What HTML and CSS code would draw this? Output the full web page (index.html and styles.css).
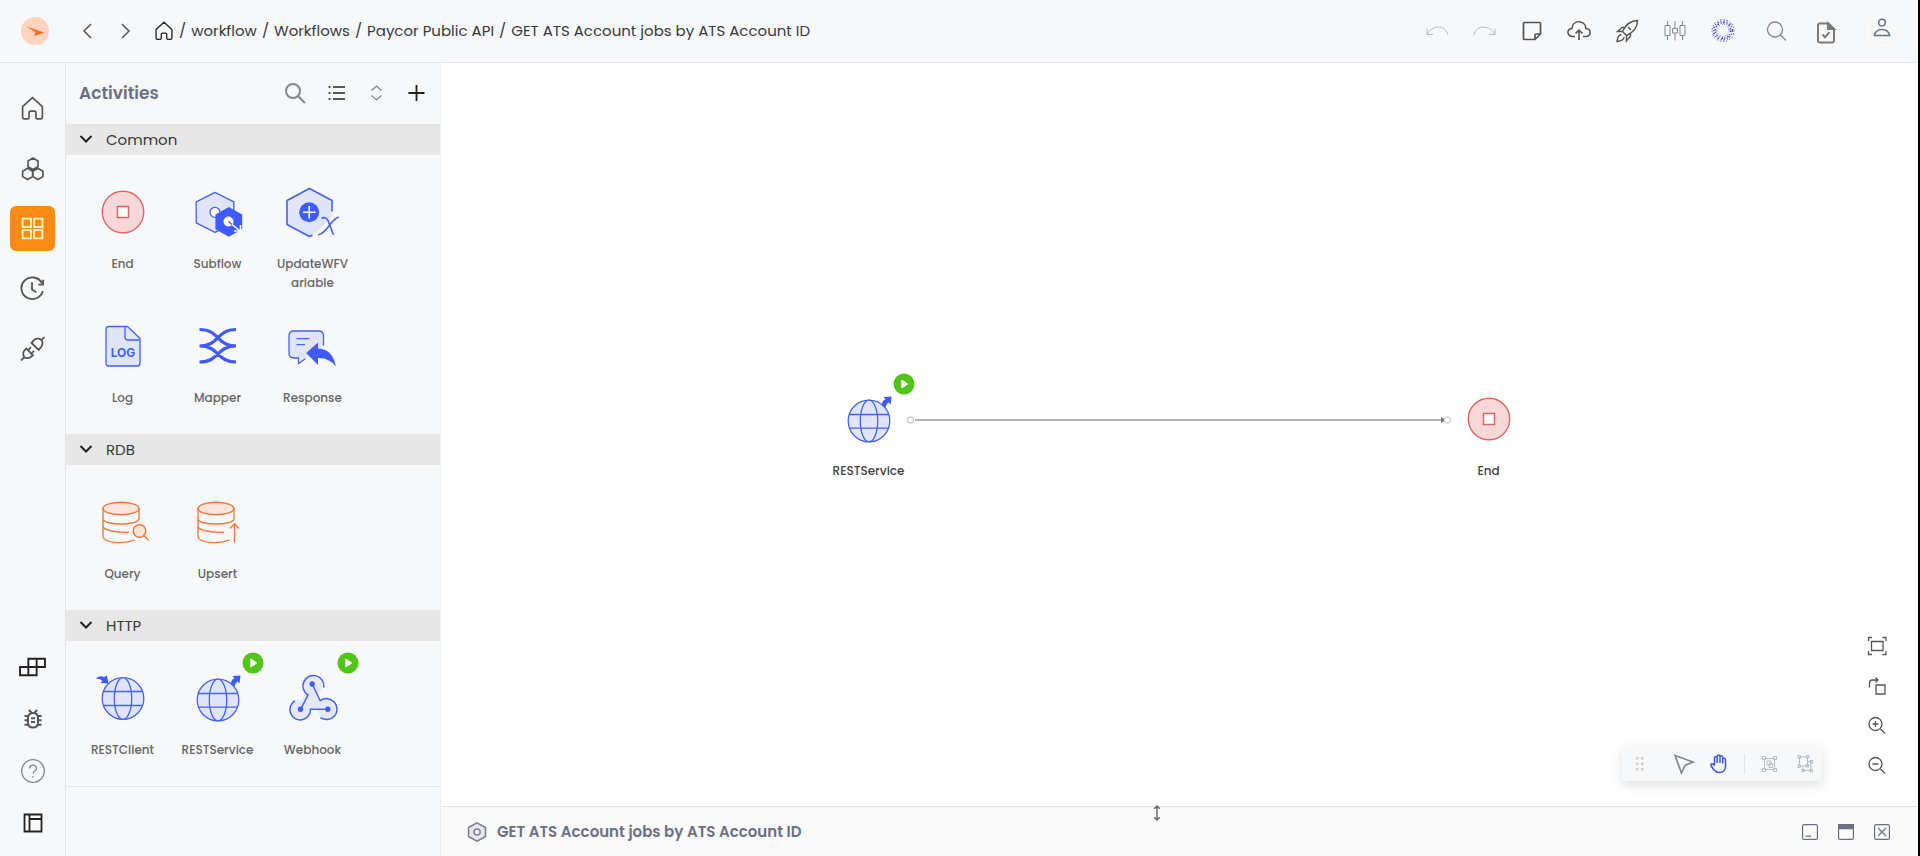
FILE: index.html
```html
<!DOCTYPE html>
<html lang="en">
<head>
<meta charset="utf-8">
<meta name="viewport" content="width=device-width, initial-scale=1">
<title>GET ATS Account jobs by ATS Account ID</title>
<link rel="stylesheet" href="styles.css">
</head>
<body>
<svg class="sprite" aria-hidden="true">
  <symbol id="i-house" viewBox="0 0 24 24"><path d="M2.5 10.2 12 1.5l9.500 8.700V20.500q0 1.500-1.500 1.500h-3.500q-1.200 0-1.200-1.200V16q0-1.500-1.500-1.500h-3.600q-1.500 0-1.500 1.500v4.800q0 1.200-1.200 1.200H4q-1.500 0-1.500-1.500z"/></symbol>
  <symbol id="i-chevron" viewBox="0 0 14 10"><path d="m1.500 1 5.500 5.500L12.500 1"/></symbol>
  <symbol id="a-end" viewBox="0 0 64 64"><circle cx="32" cy="32" r="20.700" fill="#f9d8d9" stroke="#df6466" stroke-width="1.400"/><path d="M26.500 26.500h11v11h-11z" fill="#fff" stroke="#df6466" stroke-width="1.500"/></symbol>
  <symbol id="a-globe" viewBox="0 0 64 64"><g fill="#e1e5fc" stroke="#4362ee" stroke-width="1.300"><circle cx="32" cy="34" r="20.800"/><ellipse cx="32" cy="34" rx="8.700" ry="20.800"/><path d="M12.500 27.500h39M12.500 41.200h39" fill="none"/></g><path d="M45 18q0-5 3.500-5.500L46.500 10l8-.500-1 8-2-2q-2 1-3 5z" fill="#3f5bff"/></symbol>
  <symbol id="a-play" viewBox="0 0 22 22"><circle cx="11" cy="11" r="10.500" fill="#52c41a"/><path d="M8.800 7v8l6-4z" fill="#fff" stroke="#fff" stroke-width="1" stroke-linejoin="round"/></symbol>
</svg>

<div class="app">
  <header class="topbar">
    <a class="logo" href="#" aria-label="Dashboard"><svg viewBox="0 0 28 28"><circle cx="14" cy="14" r="14" fill="#ffd3bd"/><path d="M5 9.500 23.500 15.500 13 19l1.500-4z" fill="#fa6a1a"/></svg></a>
    <nav class="history" aria-label="History">
      <button class="icon-btn" aria-label="Back"><svg viewBox="0 0 24 24"><path d="M16 5 9 12l7 7"/></svg></button>
      <button class="icon-btn" aria-label="Forward"><svg viewBox="0 0 24 24"><path d="m9 5 7 7-7 7"/></svg></button>
    </nav>
    <nav class="crumbs" aria-label="Breadcrumb">
      <a class="crumb-home" href="#" aria-label="Home"><svg viewBox="0 0 24 24"><use href="#i-house"/></svg></a>
      <span>/</span><a href="#">workflow</a>
      <span>/</span><a href="#">Workflows</a>
      <span>/</span><a href="#">Paycor Public API</a>
      <span>/</span><a href="#">GET ATS Account jobs by ATS Account ID</a>
    </nav>
    <div class="actions">
      <div class="tools">
        <button class="icon-btn pale" aria-label="Undo"><svg viewBox="0 0 24 24"><path d="M4 9.500v6h6M4 15.500C8.500 6.500 22 4.500 25 16"/></svg></button>
        <button class="icon-btn pale" aria-label="Redo"><svg viewBox="0 0 24 24"><path d="M24 9.500v6h-6M24 15.500C19.500 6.500 5.500 4.500 3 16"/></svg></button>
        <button class="icon-btn" aria-label="Note"><svg viewBox="0 0 24 24" stroke-width="1.700"><path d="M5.500 3.500h15q1 0 1 1V15L16 20.500H5.500q-1 0-1-1v-15q0-1 1-1zM21.500 15h-4q-1.500 0-1.500 1.500v4"/></svg></button>
        <button class="icon-btn" aria-label="Publish"><svg viewBox="0 0 24 24" stroke-width="1.600"><path d="M8 17.500H5.500C-.500 17-.500 9.500 5 9.500 5.500.5 18 .5 19 9.500c5.500 0 5.500 8-.500 8H16M12 21v-9.500M8.500 14.500 12 11.200l3.500 3.300"/></svg></button>
        <button class="icon-btn" aria-label="Deploy"><svg viewBox="0 0 24 24" stroke-width="1.400"><path d="M22.500 1.500C16 1.500 11 5 7.500 12.500l4 4C19 13 22.500 8 22.500 1.500zM10 8.500H7L2.500 12.500l5 0M15.500 14v3L11.500 22v-5.500M6.500 15.500c-3 0-4 2.500-4.500 7 4.500-.500 7-1.500 7-4.500M13 8l3 3"/></svg></button>
        <button class="icon-btn grey" aria-label="Settings"><svg viewBox="0 0 24 24"><path d="M4.500 2v4.500M4.500 16.500v4.500M2 6.500h5v10H2zM12 2v7.500M12 14v7.500M9.500 9.500h5V14h-5zM19.500 2v4.500M19.500 16.500v4.500M17 6.500h5v10h-5z"/></svg></button>
        <button class="icon-btn violet" aria-label="Assistant"><svg viewBox="0 0 24 24"><circle cx="12" cy="11.500" r="6" stroke-width="1" stroke-dasharray="1 2.400 .7 1.700"/><circle cx="12" cy="11.500" r="7.700" stroke-width="1.500" stroke-dasharray="1.700 1.900 1.200 1.200"/><circle cx="12" cy="11.500" r="9.300" stroke-width="1.500" stroke-dasharray="1.500 1.700 1 2.100"/><circle cx="12" cy="11.500" r="11" stroke-width="1" stroke-dasharray="1 1.800 1.500 2.200"/></svg></button>
      </div>
      <button class="icon-btn grey" aria-label="Search"><svg viewBox="0 0 24 24" stroke-width="1.300"><circle cx="12" cy="10.500" r="7.500"/><path d="m17.500 16 5.500 5.500"/></svg></button>
      <button class="icon-btn grey doc" aria-label="Tasks"><svg viewBox="0 0 24 24" stroke-width="2"><path d="M4.500 2.500h9l5.500 5.500v11.500q0 2-2 2h-12q-2 0-2-2v-15q0-2 1.500-2z"/><path d="M13 2.500v5.500h6z" fill="#7a7a7a"/><path d="m7.500 13.500 2.500 2.700 4.500-5"/></svg></button>
      <button class="avatar" aria-label="Account"><svg viewBox="0 0 24 24"><circle cx="12" cy="5.500" r="4"/><path d="M3 21c0-9.500 18-9.500 18 0z"/></svg></button>
    </div>
  </header>

  <div class="body">
    <nav class="rail" aria-label="Main">
      <div class="rail-top">
        <button class="rail-btn" aria-label="Home"><svg viewBox="0 0 24 24" stroke-width="1.600"><use href="#i-house"/></svg></button>
        <button class="rail-btn" aria-label="Models"><svg viewBox="0 0 24 24" stroke-width="1.600"><path d="m12.500 2 4.800 2.800v5.400l-4.800 2.800-4.800-2.800V4.800zM7.300 11.800l4.800 2.800v5.200l-4.800 2.800-4.800-2.800v-5.200zM17.200 11.800l4.800 2.800v5.200l-4.800 2.800-4.800-2.800v-5.200z"/></svg></button>
        <button class="rail-btn active" aria-label="Workflows"><svg viewBox="0 0 24 24" stroke-width="1.800"><path d="M2.500 2.500h8v8h-8zM13.500 2.500h8v8h-8zM2.500 13.500h8v8h-8zM13.500 13.500h8v8h-8z"/></svg></button>
        <button class="rail-btn" aria-label="History"><svg viewBox="0 0 26 26" stroke-width="1.900"><path d="M22.800 7.500A11.300 11.300 0 1 0 23.700 15.500M12.500 6.500v7.500l4.500 3"/><path d="M24 4v5h-5"/></svg></button>
        <button class="rail-btn" aria-label="Connections"><svg viewBox="0 0 24 24" stroke-width="1.700"><path d="m1 23.500 3.200-3.200M20.500 4 23.500 1M5.500 11.500l7.500 7.500M6 12.200c-4.500 3.300-3 8.600 0 9 3 .3 5-1.200 6.200-2.800M7.800 13.500l2.700-2.700M11 16.800l2.500-2.600M10.500 6l8 8M11.500 6.500C14 1.500 19 2 20.500 4c2 2 1.500 6-2.800 9.200"/></svg></button>
      </div>
      <div class="rail-bottom">
        <button class="rail-btn small dark" aria-label="Blocks"><svg class="wide" viewBox="0 0 26 20"><path d="M1 10h8v8H1zM9 10h8v8H9zM9 2h8v8H9zM17 2h8v8h-8z" stroke-width="1.800"/></svg></button>
        <button class="rail-btn small" aria-label="Debug"><svg viewBox="0 0 24 24" stroke-width="2"><path d="M12 6q5 0 5 5v4.500q0 5-5 5t-5-5V11q0-5 5-5zM8 3l2.500 2.700M16 3l-2.500 2.700M3.500 9H7M3.500 13.300H7M3.500 17.700H7M17 9h3.500M17 13.300h3.500M17 17.700h3.500M10 11.200h4M10 15h4"/></svg></button>
        <button class="rail-btn small grey" aria-label="Help"><svg viewBox="0 0 24 24" stroke-width="1.300"><circle cx="12" cy="12" r="11.300"/><path d="M8.500 9.500c0-4.500 7-4.500 7 0 0 2.500-3.500 2.500-3.500 5M12 17v1.500"/></svg></button>
        <button class="rail-btn small dark" aria-label="Layout"><svg viewBox="0 0 24 24" stroke-width="1.800"><path d="M3.500 3.500h17v17h-17zM8.500 3.500v17M8.500 8h12"/></svg></button>
      </div>
    </nav>

    <aside class="panel">
      <div class="panel-head">
        <h1>Activities</h1>
        <button class="icon-btn grey" aria-label="Search activities"><svg viewBox="0 0 24 24" stroke-width="2"><circle cx="9" cy="10" r="7"/><path d="m14 15 7 7"/></svg></button>
        <button class="icon-btn dark" aria-label="List view"><svg viewBox="0 0 24 24" stroke-width="1.600"><path d="M9 6h12M9 12h12M9 18h12M4.500 6h2M4.500 12h2M4.500 18h2"/></svg></button>
        <button class="icon-btn grey" aria-label="Expand all"><svg viewBox="0 0 24 24" stroke-width="1.300"><path d="m7.500 9.500 5-4.500 5 4.500M7.500 14.500l5 4.500 5-4.500"/></svg></button>
        <button class="icon-btn dark" aria-label="Add"><svg viewBox="0 0 24 24" stroke-width="1.800"><path d="M12.500 4v16M4.500 12h16"/></svg></button>
      </div>

      <section class="group">
        <h2><button class="group-head"><svg viewBox="0 0 14 10"><use href="#i-chevron"/></svg>Common</button></h2>
        <div class="tiles">
          <div class="tile"><div class="pic"><svg viewBox="0 0 64 64"><use href="#a-end"/></svg></div><span>End</span></div>
          <div class="tile"><div class="pic"><svg viewBox="0 0 64 64"><path d="M29 12.300 47.800 21.800v21L29 52.300 10.200 42.800v-21z" fill="#e1e5fc" stroke="#4362ee" stroke-width="1.300" stroke-linejoin="round"/><circle cx="29" cy="32.300" r="5" fill="#fff" stroke="#4362ee" stroke-width="1.300"/><path d="m42.800 27 13.400 7.500v14.700l-13.400 7.500-13.400-7.500V34.500z" fill="#3f5bff"/><circle cx="42.500" cy="41.500" r="5" fill="#fff"/><path d="m42.500 41.500 3.500 3" stroke="#3f5bff" stroke-width="1.300"/><path d="m46 44.500 7.500 6M54.500 45v6h-6.500" fill="none" stroke="#fff" stroke-width="1.600"/></svg></div><span>Subflow</span></div>
          <div class="tile"><div class="pic"><svg viewBox="0 0 64 64"><path d="M28.500 8.500 51 20.500V36L38 50l-9.500 6.500L6 44.300V20.500z" fill="#e1e5fc"/><g fill="none" stroke="#4362ee" stroke-width="1.600" stroke-linejoin="round"><path d="M51 31.500v-11l-22.500-12L6 20.500v24l22.500 12 3-1.500"/><path d="M40.500 38.500q4-2.500 6.500 2l5.500 14.200M57.800 37.300c-7 0-12 17-20.600 17.400"/></g><circle cx="28.200" cy="32.300" r="10" fill="#3f5bff"/><path d="M28.200 26v12.600M21.900 32.300h12.600" stroke="#fff" stroke-width="1.500"/></svg></div><span>UpdateWFV<wbr>ariable</span></div>
          <div class="tile"><div class="pic"><svg viewBox="0 0 64 64"><path d="M18 12.500h18.500l12.500 12v24.500q0 3-3 3H18q-3 0-3-3V15.500q0-3 3-3z" fill="#e1e5fc" stroke="#4362ee" stroke-width="1.300" stroke-linejoin="round"/><path d="M34 12.500v10.500q0 3 3 3h12" fill="none" stroke="#4362ee" stroke-width="1.300"/><text class="log-text" x="32" y="43" text-anchor="middle">LOG</text></svg></div><span>Log</span></div>
          <div class="tile"><div class="pic"><svg viewBox="0 0 64 64"><path d="M13.500 15.500C34 15.500 30 32 50 32M50 15.500C30 15.500 34 32 13.500 32M13.500 32C34 32 30 48 50 48M50 32C30 32 34 48 13.500 48" fill="none" stroke="#3f5bff" stroke-width="3.200"/></svg></div><span>Mapper</span></div>
          <div class="tile"><div class="pic"><svg viewBox="0 0 64 64"><path d="M42.500 31.500V22q0-5-5-5H13q-5 0-5 5v17q0 5 5 5h4.500v5.500l7-4.700" fill="#e1e5fc" stroke="#4362ee" stroke-width="1.300"/><path d="M15.500 24.700h13M15.500 30.700h8.500" stroke="#4362ee" stroke-width="1.300"/><path d="M25.200 39 37 28.500v6q14 0 18 18-7-9-18-8.500v7z" fill="#3f5bff"/></svg></div><span>Response</span></div>
        </div>
      </section>

      <section class="group">
        <h2><button class="group-head"><svg viewBox="0 0 14 10"><use href="#i-chevron"/></svg>RDB</button></h2>
        <div class="tiles">
          <div class="tile"><div class="pic"><svg viewBox="0 0 64 64" fill="none" stroke="#ee7a3c" stroke-width="1.400" stroke-linecap="round"><ellipse cx="30" cy="18.500" rx="18" ry="6.300" fill="#fbe4db"/><path d="M48 18.500v10.300c-1 7-35 7-36 0M12 18.500v28c1 7 22 7.500 31 3.700M12 36.500c1 4 14 6.200 25.500 5.800"/><circle cx="48.500" cy="41" r="6.300" fill="#fbe4db"/><path d="m53 45.500 4.200 4.200"/></svg></div><span>Query</span></div>
          <div class="tile"><div class="pic"><svg viewBox="0 0 64 64" fill="none" stroke="#ee7a3c" stroke-width="1.400" stroke-linecap="round"><ellipse cx="30" cy="18.500" rx="18" ry="6.300" fill="#fbe4db"/><path d="M48 18.500v10.300c-1 7-35 7-36 0M12 18.500v28c1 7 22 7.500 31 3.700M12 36.500c1 4 14 6.200 25.500 5.800M48.500 52V34M44.500 38l4-4.300 4 4.300"/></svg></div><span>Upsert</span></div>
        </div>
      </section>

      <section class="group">
        <h2><button class="group-head"><svg viewBox="0 0 14 10"><use href="#i-chevron"/></svg>HTTP</button></h2>
        <div class="tiles">
          <div class="tile"><div class="pic"><svg viewBox="0 0 64 64"><g fill="#e1e5fc" stroke="#4362ee" stroke-width="1.300"><circle cx="32" cy="32.500" r="20.800"/><ellipse cx="32" cy="32.500" rx="8.700" ry="20.800"/><path d="M12.500 25.500h39M12.500 39.500h39" fill="none"/></g><path d="M5 13q2-4 8-2l3-1.500 1.500 8-8-.500 2-2q-3-3-6.500-2z" fill="#3f5bff"/></svg></div><span>RESTClient</span></div>
          <div class="tile"><div class="pic"><svg viewBox="0 0 64 64"><use href="#a-globe"/></svg><svg class="badge" viewBox="0 0 22 22"><use href="#a-play"/></svg></div><span>RESTService</span></div>
          <div class="tile"><div class="pic"><svg viewBox="0 0 64 64"><path d="M32 10a10 10 0 0 1 5 18l2.500 6.500a10 10 0 1 1 0 17l-3-8h-7.500a10 10 0 1 1-9-10l7-5a10 10 0 0 1 5-18.500z" fill="#e6e9fd"/><g fill="none" stroke="#4362ee" stroke-width="1.500"><path d="M42.800 21.500A10.500 10.500 0 1 0 27 29L19.500 43.300M31.200 18l8 16.700A10.500 10.500 0 1 1 39.500 51.700M46.800 43.300H29.500A10.300 10.300 0 1 1 14 34.700"/></g><g fill="#3f5bff"><circle cx="31.200" cy="18" r="2.700"/><circle cx="19.500" cy="43.300" r="2.700"/><circle cx="46.800" cy="43.300" r="2.700"/></g></svg><svg class="badge" viewBox="0 0 22 22"><use href="#a-play"/></svg></div><span>Webhook</span></div>
        </div>
      </section>
    </aside>

    <main class="main">
      <div class="canvas">
        <svg class="edge" width="546" height="12" viewBox="0 0 546 12"><path d="M9 6h526" stroke="#b4b4b4" stroke-width="2"/><path d="m535 3 5 3-5 3z" fill="#777"/><circle cx="4.500" cy="6" r="3" fill="#fff" stroke="#cfcfcf" stroke-width="1.400"/><circle cx="541.500" cy="6" r="3" fill="#fff" stroke="#d8d8d8" stroke-width="1.400"/></svg>
        <div class="tile node node-start"><div class="pic"><svg viewBox="0 0 64 64"><use href="#a-globe"/></svg><svg class="badge" viewBox="0 0 22 22"><use href="#a-play"/></svg></div><span>RESTService</span></div>
        <div class="tile node node-end"><div class="pic"><svg viewBox="0 0 64 64"><use href="#a-end"/></svg></div><span>End</span></div>

        <div class="mode-bar">
          <svg class="grip" viewBox="0 0 8 14" fill="#cfcfcf"><path d="M0 0h2.500v2.500H0zM5 0h2.500v2.500H5zM0 5.500h2.500V8H0zM5 5.500h2.500V8H5zM0 11h2.500v2.500H0zM5 11h2.500v2.500H5z"/></svg>
          <button class="icon-btn grey" aria-label="Select"><svg viewBox="0 0 24 24" stroke-width="1.700"><path d="M3 3.500 21 10l-8 3.500L9.500 21z"/></svg></button>
          <button class="icon-btn blue" aria-label="Pan"><svg viewBox="0 0 24 24" stroke-width="1.500"><path d="M6.500 13V6q0-1.500 1.300-1.500T9.200 6v5M9.200 11V4.500q0-1.500 1.400-1.500T12 4.500V11M12 11V5q0-1.300 1.300-1.300T14.700 5v6.500M14.700 11V7.500q0-1.300 1.400-1.300t1.400 1.300V14q0 6.500-6 6.500-3.500 0-5.500-2.500L3 13.800q-.500-1.500.8-2 1-.300 2.700 2"/></svg></button>
          <span class="divider"></span>
          <button class="icon-btn pale" aria-label="Group"><svg viewBox="0 0 24 24"><path d="M7.500 6.500h10v11h-10zM5.500 4.500h3v3h-3zM16.500 4.500h3v3h-3zM5.500 16.500h3v3h-3zM16.500 16.500h3v3h-3zM10 9h4v4h-4zM12 11.500h3.500v4H12z"/></svg></button>
          <button class="icon-btn pale" aria-label="Ungroup"><svg viewBox="0 0 24 24"><path d="M6.500 5h8v9h-8zM5 3.500h2.500V6H5zM13.500 3.500H16V6h-2.500zM5 13h2.500v2.500H5zM14.500 9.500h3.500v9h-8v-4M17 8.500h2.500V11H17zM17 17.500h2.500V20H17zM9 17.500h2.500V20H9zM13 12.500h2.500V15H13z"/></svg></button>
        </div>
        <div class="zoom-bar">
          <button class="icon-btn" aria-label="Fit"><svg viewBox="0 0 24 24"><path d="M6.500 7.500h11.500v9H6.500zM3.500 7V3.500H7M17.500 3.500H21V7M3.500 17v3.500H7M17.500 20.500H21V17"/></svg></button>
          <button class="icon-btn" aria-label="Rotate"><svg viewBox="0 0 24 24"><path d="M11 11h9v9h-9zM4.500 13.500V9q0-3 3-3h5M10.500 3.500 13 6l-2.500 2.500"/></svg></button>
          <button class="icon-btn" aria-label="Zoom in"><svg viewBox="0 0 24 24"><circle cx="10.500" cy="10" r="6.500"/><path d="m15.500 15 4.500 4.500M10.500 7v6M7.500 10h6"/></svg></button>
          <button class="icon-btn" aria-label="Zoom out"><svg viewBox="0 0 24 24"><circle cx="10.500" cy="10" r="6.500"/><path d="m15.500 15 4.500 4.500M7.500 10h6"/></svg></button>
        </div>
      </div>

      <footer class="dock">
        <svg class="resize" viewBox="0 0 8 16"><path d="M4 1v14M1.200 3.800 4 1l2.800 2.800M1.200 12.200 4 15l2.800-2.800" fill="none" stroke="#6b6b6b" stroke-width="1.500"/></svg>
        <svg class="dock-icon" viewBox="0 0 20 20" stroke-width="1.500"><path d="m10 .8 8.500 4.700v9L10 19.200l-8.500-4.700v-9z" fill="#e3e4ee"/><circle cx="10" cy="10" r="3" fill="#fff"/></svg>
        <h2>GET ATS Account jobs by ATS Account ID</h2>
        <div class="dock-actions">
          <button aria-label="Minimize"><svg viewBox="0 0 16 16"><rect x=".6" y=".6" width="14.800" height="14.800" rx="1.500"/><path d="M3.500 12.200H9"/></svg></button>
          <button aria-label="Maximize"><svg viewBox="0 0 16 16"><rect x=".6" y=".6" width="14.800" height="14.800" rx="1.500"/><path d="M.6.6h14.800v4H.6z" fill="#6b7080"/></svg></button>
          <button aria-label="Close"><svg viewBox="0 0 16 16"><rect x=".6" y=".6" width="14.800" height="14.800" rx="1.500"/><path d="m4 4 8 8M12 4l-8 8"/></svg></button>
        </div>
      </footer>
    </main>
  </div>
</div>
</body>
</html>
```
FILE: styles.css
```css
* { box-sizing: border-box; }

body {
  margin: 0;
  font-family: Poppins, Inter, "Liberation Sans", sans-serif;
  color: #3a3a3a;
  background: #f7f8fa;
}

h1, h2 { margin: 0; }

button {
  padding: 0;
  border: 0;
  background: none;
  font: inherit;
  color: inherit;
  cursor: pointer;
}

a { color: inherit; text-decoration: none; }

.sprite { position: absolute; width: 0; height: 0; }

.app {
  display: flex;
  flex-direction: column;
  height: 100vh;
  min-height: 800px;
  border-right: 2px solid #000;
}

/* Top bar */
.topbar {
  display: flex;
  flex: none;
  align-items: center;
  height: 63px;
  padding: 0 21px;
  border-bottom: 1px solid #e3e5e9;
}

.logo, .logo svg { display: block; width: 28px; height: 28px; }

.history {
  display: flex;
  gap: 14px;
  margin: 0 17px 0 26px;
}

.icon-btn {
  flex: none;
  width: 24px;
  height: 24px;
  color: #555;
}

.icon-btn svg, .rail-btn svg, .avatar svg, .crumb-home svg, .group-head svg {
  display: block;
  fill: none;
  stroke: currentColor;
}

.icon-btn svg { width: 24px; height: 24px; overflow: visible; }
.icon-btn.pale { color: #b9bbc0; }
.icon-btn.grey { color: #85878c; }
.icon-btn.dark { color: #222; }
.icon-btn.blue { color: #3f5bd9; }
.icon-btn.violet { color: #5647c9; }
.icon-btn.doc { padding-top: 2px; color: #7a7a7a; }

.history svg { stroke-width: 1.5px; }

.crumbs {
  display: flex;
  align-items: center;
  gap: 5px;
  font-size: 15px;
  line-height: 24px;
  white-space: nowrap;
}

.crumb-home { color: #222; }
.crumb-home svg { width: 20px; height: 20px; stroke-width: 1.6px; }

.actions {
  display: flex;
  align-items: center;
  gap: 28px;
  margin-left: auto;
}

.tools { display: flex; gap: 24px; }

.avatar {
  width: 30px;
  height: 30px;
  padding: 1px 4px 7px;
  border: 1px solid #fff;
  border-radius: 50%;
  color: #6b7080;
}

.avatar svg { width: 20px; height: 20px; stroke-width: 1.8px; }

/* Side rail */
.body { display: flex; flex: 1; min-height: 0; }

.rail {
  display: flex;
  flex: none;
  flex-direction: column;
  justify-content: space-between;
  width: 66px;
  padding: 23px 10px 13px;
  border-right: 1px solid #e3e5e9;
}

.rail-top, .rail-bottom { display: flex; flex-direction: column; }
.rail-top { gap: 15px; }
.rail-bottom { gap: 12px; }

.rail-btn {
  display: flex;
  align-items: center;
  justify-content: center;
  width: 45px;
  height: 45px;
  border-radius: 6px;
  color: #555;
}

.rail-btn svg { width: 25px; height: 25px; }
.rail-btn.small { height: 40px; }
.rail-btn.small svg { width: 24px; height: 24px; }
.rail-btn.small .wide { width: 27px; }
.rail-btn.dark { color: #222; }
.rail-btn.grey { color: #85878c; }
.rail-btn.active { color: #fff3c4; background: #fa8c16; }

/* Activities panel */
.panel {
  flex: none;
  width: 375px;
  border-right: 1px solid #eceef1;
}

.panel-head {
  display: flex;
  align-items: center;
  gap: 16px;
  height: 61px;
  padding: 0 12px 2px 13px;
}

.panel-head h1 {
  margin-right: auto;
  font-size: 17px;
  font-weight: 600;
  line-height: 26px;
  color: #6b7080;
}

.group h2 { font-size: 15px; font-weight: 400; line-height: 31px; }

.group-head {
  display: flex;
  align-items: center;
  gap: 13px;
  width: 100%;
  height: 31px;
  padding: 0 13px;
  color: #3a3a3a;
  background: #e7e7e7;
}

.group-head svg { width: 14px; height: 10px; stroke: #222; stroke-width: 2px; }

.tiles {
  display: grid;
  grid-template-columns: repeat(3, 95px);
  row-gap: 22px;
  padding: 25px 9px 8px;
}

.group:last-child { border-bottom: 1px solid #e3e5e9; }

.tile {
  display: flex;
  flex-direction: column;
  align-items: center;
  gap: 10px;
  width: 95px;
  min-height: 112px;
  font-size: 12px;
  font-weight: 500;
  line-height: 19px;
  text-align: center;
  color: #666;
}

.tile > span { max-width: 80px; }

.pic { position: relative; width: 64px; height: 64px; }
.pic svg { display: block; width: 64px; height: 64px; }

.pic .badge {
  position: absolute;
  top: -14px;
  left: 56px;
  width: 22px;
  height: 22px;
}

.log-text {
  font-family: Inter, sans-serif;
  font-size: 12px;
  font-weight: 700;
  fill: #4362ee;
}

/* Workspace */
.main { display: flex; flex: 1; flex-direction: column; min-width: 0; }

.canvas {
  position: relative;
  flex: 1;
  overflow: hidden;
  background: #fff;
}

.node { position: absolute; color: #444; }
.node-start { top: 324px; left: 380px; }
.node-end { top: 324px; left: 1000px; }
.edge { position: absolute; top: 351px; left: 465px; }

.mode-bar {
  position: absolute;
  right: 96px;
  bottom: 25px;
  display: flex;
  align-items: center;
  gap: 12px;
  height: 35px;
  padding: 0 5px 0 14px;
  background: #f7f8fa;
  box-shadow: 0 4px 12px rgba(0, 0, 0, 0.13);
}

.grip { width: 8px; height: 14px; margin-right: 16px; }
.divider { width: 1px; height: 20px; background: #e0e2e6; }

.zoom-bar {
  position: absolute;
  right: 29px;
  bottom: 28px;
  display: flex;
  flex-direction: column;
  gap: 16px;
}

.zoom-bar svg { stroke-width: 1.3px; }

/* Bottom dock */
.dock {
  position: relative;
  display: flex;
  flex: none;
  align-items: center;
  gap: 10px;
  height: 50px;
  padding: 0 28px 0 26px;
  border-top: 1px solid #e3e3e3;
  color: #6b7080;
  background: #fafafa;
}

.dock h2 { font-size: 15px; font-weight: 600; line-height: 24px; }
.dock-icon { width: 20px; height: 20px; stroke: #7b7f8c; }

.resize {
  position: absolute;
  top: -2px;
  left: calc(50% - 27px);
  width: 8px;
  height: 16px;
}

.dock-actions { display: flex; gap: 20px; margin-left: auto; }

.dock-actions svg {
  display: block;
  width: 16px;
  height: 16px;
  fill: none;
  stroke: #6b7080;
  stroke-width: 1.2px;
}
```
